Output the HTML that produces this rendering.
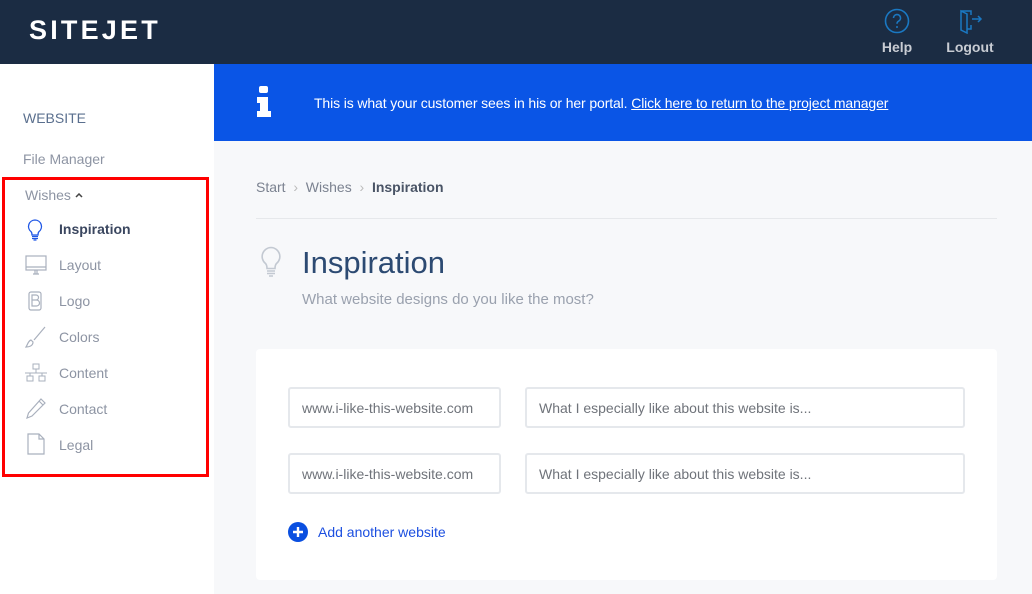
<!DOCTYPE html>
<html><head><meta charset="utf-8">
<style>
*{margin:0;padding:0;box-sizing:border-box}
body{width:1032px;height:594px;overflow:hidden;font-family:"Liberation Sans",sans-serif;background:#f7f8fa;position:relative}
.hdr{position:absolute;left:0;top:0;width:1032px;height:64px;background:#1b2c43}
.logo{position:absolute;left:29px;top:15px;color:#fff;font-size:27px;font-weight:bold;letter-spacing:3.2px}
.hi{position:absolute;top:8px;text-align:center;color:#c8ccd3;font-size:14px;font-weight:bold}
.side{position:absolute;left:0;top:64px;width:214px;height:530px;background:#fff}
.s{position:absolute;font-size:14px;color:#8d94a3}
.red{position:absolute;left:2px;top:177px;width:207px;height:300px;border:3px solid #f00}
.ic{position:absolute;left:25px}
.ban{position:absolute;left:214px;top:64px;width:818px;height:77px;background:#0a55e6;color:#fff;font-size:14px;letter-spacing:-0.12px}
.card{position:absolute;left:256px;top:349px;width:741px;height:231px;background:#fff;border-radius:4px}
.in{position:absolute;height:41px;border:2px solid #e5e8ec;border-radius:3px;background:#fff;font-size:14px;color:#6f737a;padding:11px 0 0 12px}
</style></head><body>
<div class="hdr">
 <div class="logo">SITEJET</div>
 <div class="hi" style="left:880px;width:34px">
  <svg width="26" height="26" viewBox="0 0 26 26"><circle cx="13" cy="13" r="11.5" fill="none" stroke="#1a78c2" stroke-width="1.6"/><path d="M9.5 10a3.5 3.5 0 1 1 5 3.2c-1.2.6-1.5 1.3-1.5 2.6" fill="none" stroke="#1a78c2" stroke-width="1.6"/><circle cx="13" cy="19" r="1" fill="#1a78c2"/></svg>
  <div style="margin-top:2px">Help</div></div>
 <div class="hi" style="left:945px;width:50px">
  <svg width="26" height="26" viewBox="0 0 26 26"><path d="M4 3h10v4M14 17v4H10" fill="none" stroke="#1a78c2" stroke-width="1.5"/><path d="M4 3l6 3v19l-6-3z" fill="none" stroke="#1a78c2" stroke-width="1.5"/><path d="M15 11h9M21 8l3 3-3 3" fill="none" stroke="#1a78c2" stroke-width="1.5"/></svg>
  <div style="margin-top:2px">Logout</div></div>
</div>
<div class="side">
 <div class="s" style="left:23px;top:46px;color:#5a6f8e">WEBSITE</div>
 <div class="s" style="left:23px;top:87px">File Manager</div>
 <div class="s" style="left:25px;top:123px">Wishes</div>
 <svg style="position:absolute;left:75px;top:129px" width="8" height="5" viewBox="0 0 8 5"><path d="M1 4l3-3 3 3" fill="none" stroke="#444" stroke-width="1.5"/></svg>
 <svg class="ic" style="top:155px" width="20" height="22" viewBox="0 0 20 22"><path d="M10 1a6.5 6.5 0 0 0-4 11.6c.8.8 1 2 1 3.4h6c0-1.4.2-2.6 1-3.4A6.5 6.5 0 0 0 10 1z" fill="none" stroke="#1f57e6" stroke-width="1.3"/><path d="M7 17.5h6M7 19.5h6M8.5 21h3" stroke="#1f57e6" stroke-width="1.2"/></svg>
 <div class="s" style="left:59px;top:157px;color:#3b4760;font-weight:bold">Inspiration</div>
 <svg class="ic" style="top:191px" width="22" height="20" viewBox="0 0 22 20"><rect x="1" y="1" width="20" height="14" fill="none" stroke="#a9b0bd" stroke-width="1.2"/><path d="M1 12h20M8 19h6M10 15v4M12 15v4" stroke="#a9b0bd" stroke-width="1.2"/></svg>
 <div class="s" style="left:59px;top:193px">Layout</div>
 <svg class="ic" style="top:227px;left:28px" width="14" height="20" viewBox="0 0 14 20"><rect x="1" y="1" width="12" height="18" rx="2" fill="none" stroke="#a9b0bd" stroke-width="1.2"/><path d="M4 4h4a2 2 0 0 1 0 5H4zM4 9h4.5a2.5 2.5 0 0 1 0 6H4z" fill="none" stroke="#a9b0bd" stroke-width="1.2"/></svg>
 <div class="s" style="left:59px;top:229px">Logo</div>
 <svg class="ic" style="top:262px" width="22" height="22" viewBox="0 0 22 22"><path d="M20 1L9 14M1 21c3 0 7-1 7-5l-2-2c-3 1-3 4-5 7z" fill="none" stroke="#a9b0bd" stroke-width="1.2"/></svg>
 <div class="s" style="left:59px;top:265px">Colors</div>
 <svg class="ic" style="top:299px" width="22" height="20" viewBox="0 0 22 20"><rect x="8" y="1" width="6" height="5" fill="none" stroke="#a9b0bd"/><rect x="2" y="13" width="6" height="5" fill="none" stroke="#a9b0bd"/><rect x="14" y="13" width="6" height="5" fill="none" stroke="#a9b0bd"/><path d="M11 6v4M0 10h22M5 10v3M17 10v3" stroke="#a9b0bd"/></svg>
 <div class="s" style="left:59px;top:301px">Content</div>
 <svg class="ic" style="top:333px" width="22" height="22" viewBox="0 0 22 22"><path d="M16 2l4 4L7 19l-5 2 1.5-5z M14 4l4 4" fill="none" stroke="#a9b0bd" stroke-width="1.2"/></svg>
 <div class="s" style="left:59px;top:337px">Contact</div>
 <svg class="ic" style="top:369px;left:27px" width="18" height="22" viewBox="0 0 18 22"><path d="M1 1h11l5 5v15H1zM12 1v5h5" fill="none" stroke="#a9b0bd" stroke-width="1.2"/></svg>
 <div class="s" style="left:59px;top:373px">Legal</div>
</div>
<div class="red"></div>
<div class="ban">
 <svg style="position:absolute;left:42px;top:22px" width="16" height="32" viewBox="0 0 16 32"><rect x="3" y="0" width="9" height="7" rx="2" fill="#fff"/><path d="M1 11h11v14h3v6H1v-6h3v-8H1z" fill="#fff"/></svg>
 <div style="position:absolute;left:100px;top:31px">This is what your customer sees in his or her portal. <u>Click here to return to the project manager</u></div>
</div>
<div style="position:absolute;left:256px;top:179px;font-size:14px;color:#7b8290">Start &nbsp;<span style="color:#bbb">&#8250;</span>&nbsp; Wishes &nbsp;<span style="color:#bbb">&#8250;</span>&nbsp; <b style="color:#4a5466">Inspiration</b></div>
<div style="position:absolute;left:256px;top:218px;width:741px;height:1px;background:#e6e8eb"></div>
<svg style="position:absolute;left:260px;top:246px" width="22" height="32" viewBox="0 0 22 32"><path d="M11 1.5a9 9 0 0 0-5.5 16c1 1 1.5 2.5 1.5 5h8c0-2.5.5-4 1.5-5a9 9 0 0 0-5.5-16z" fill="none" stroke="#c3c9d2" stroke-width="1.6"/><path d="M7 25h8M7 27.5h8M9 30h4" stroke="#c3c9d2" stroke-width="1.5"/></svg>
<div style="position:absolute;left:302px;top:245px;font-size:31px;color:#2c4a72">Inspiration</div>
<div style="position:absolute;left:302px;top:291px;font-size:15px;color:#9aa1ae">What website designs do you like the most?</div>
<div class="card">
 <div class="in" style="left:32px;top:38px;width:213px">www.i-like-this-website.com</div>
 <div class="in" style="left:269px;top:38px;width:440px">What I especially like about this website is...</div>
 <div class="in" style="left:32px;top:104px;width:213px">www.i-like-this-website.com</div>
 <div class="in" style="left:269px;top:104px;width:440px">What I especially like about this website is...</div>
 <svg style="position:absolute;left:32px;top:173px" width="20" height="20" viewBox="0 0 20 20"><circle cx="10" cy="10" r="10" fill="#0a4fe0"/><path d="M10 5v10M5 10h10" stroke="#fff" stroke-width="2.4"/></svg>
 <div style="position:absolute;left:62px;top:175px;font-size:14px;color:#1c4fe0">Add another website</div>
</div>
</body></html>
